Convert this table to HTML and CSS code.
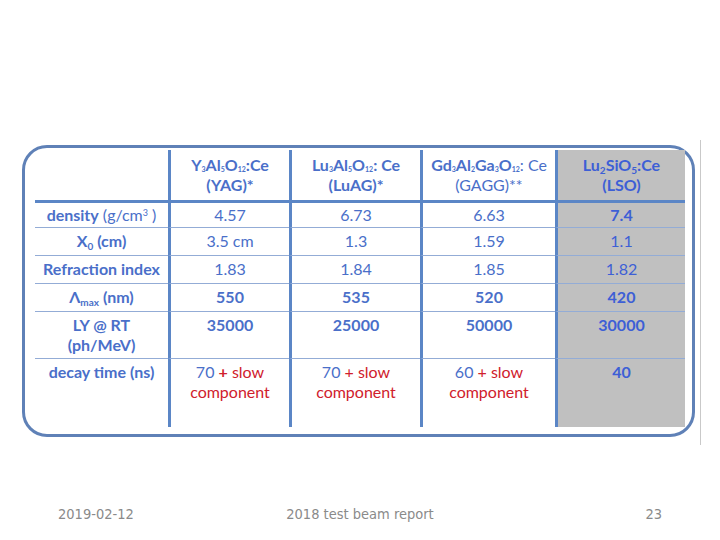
FILE: index.html
```html
<!DOCTYPE html>
<html>
<head>
<meta charset="utf-8">
<link rel="stylesheet" href="styles.css">
</head>
<body>
<div class="slide">
  <div class="wrap">
    <div class="frame">
      <div class="grid">
        <div class="c hd first"></div>
        <div class="c hd"><b>Y<sub class="s">3</sub>Al<sub class="s">5</sub>O<sub class="s">12</sub>:Ce</b><br><b>(YAG)*</b></div>
        <div class="c hd"><b>Lu<sub class="s">3</sub>Al<sub class="s">5</sub>O<sub class="s">12</sub>: Ce</b><br><b>(LuAG)*</b></div>
        <div class="c hd"><b>Gd<sub class="s">3</sub>Al<sub class="s">2</sub>Ga<sub class="s">3</sub>O<sub class="s">12</sub></b>: Ce<br>(GAGG)**</div>
        <div class="c hd gray"><b>Lu<sub class="m">2</sub>SiO<sub class="m">5</sub>:Ce</b><br><b>(LSO)</b></div>

        <div class="c r1 first"><b>density</b> (g/cm<sup class="p">3</sup> )</div>
        <div class="c r1">4.57</div>
        <div class="c r1">6.73</div>
        <div class="c r1">6.63</div>
        <div class="c r1 gray"><b>7.4</b></div>

        <div class="c rn first"><b>X<sub class="m">0</sub> (cm)</b></div>
        <div class="c rn">3.5 cm</div>
        <div class="c rn">1.3</div>
        <div class="c rn">1.59</div>
        <div class="c rn gray">1.1</div>

        <div class="c rn first"><b>Refraction index</b></div>
        <div class="c rn">1.83</div>
        <div class="c rn">1.84</div>
        <div class="c rn">1.85</div>
        <div class="c rn gray">1.82</div>

        <div class="c rn first"><b>Λ<sub class="m">max</sub> (nm)</b></div>
        <div class="c rn"><b>550</b></div>
        <div class="c rn"><b>535</b></div>
        <div class="c rn"><b>520</b></div>
        <div class="c rn gray"><b>420</b></div>

        <div class="c rn first"><b>LY @ RT<br>(ph/MeV)</b></div>
        <div class="c rn"><b>35000</b></div>
        <div class="c rn"><b>25000</b></div>
        <div class="c rn"><b>50000</b></div>
        <div class="c rn gray"><b>30000</b></div>

        <div class="c rn first"><b>decay time (ns)</b></div>
        <div class="c rn">70 <span class="red"><b>+</b> slow<br>component</span></div>
        <div class="c rn">70 <span class="red">+ slow<br>component</span></div>
        <div class="c rn">60 <span class="red">+ slow<br>component</span></div>
        <div class="c rn gray"><b>40</b></div>
      </div>
    </div>
  </div>
  <div class="footer">
    <span class="date">2019-02-12</span>
    <span class="title">2018 test beam report</span>
    <span class="num">23</span>
  </div>
</div>
</body>
</html>
```
FILE: styles.css
```css
html, body {
  margin: 0;
  padding: 0;
  background: #ffffff;
}
.slide {
  width: 720px;
  height: 540px;
  padding-top: 140px;
  box-sizing: border-box;
  overflow: hidden;
}
.wrap {
  margin-left: 22px;
  width: 679px;
  height: 305px;
  padding-top: 5px;
  box-sizing: border-box;
  border-right: 1px solid #c9c9c9;
}
.frame {
  width: 673px;
  height: 292px;
  box-sizing: border-box;
  border: 3px solid #5f81b7;
  border-radius: 25px;
  padding: 2px 7px 7px 10px;
}
.grid {
  display: grid;
  grid-template-columns: 133px 121px 131px 135px 130px;
  grid-template-rows: 50px 27px 28px 28px 28px 47px 69px;
  font-family: Lato, "Open Sans", sans-serif;
  font-size: 16px;
  line-height: 20px;
  color: #4a6fc9;
}
.c {
  box-sizing: border-box;
  text-align: center;
  padding-top: 3px;
  border-left: 3px solid #5b86c6;
  border-top: 1px solid #93acd6;
  white-space: nowrap;
}
.c.first {
  border-left: none;
}
.c.hd {
  border-top: none;
  padding-top: 5px;
}
.c.r1 {
  border-top: 3px solid #5b86c6;
  padding-top: 2px;
}
.gray {
  background: #c0c0c0;
  color: #3d5fd6;
}
b {
  font-weight: 700;
}
.s {
  font-size: 7px;
  vertical-align: -1px;
  line-height: 0;
}
.m {
  font-size: 10px;
  vertical-align: -3px;
  line-height: 0;
}
.p {
  font-size: 9px;
  vertical-align: 5px;
  line-height: 0;
}
.red {
  color: #d0202c;
}
.footer {
  margin-top: 60px;
  display: grid;
  grid-template-columns: 58px 1fr 1fr 58px;
  font-family: "DejaVu Sans Condensed", "DejaVu Sans", sans-serif;
  font-size: 14.5px;
  line-height: 18px;
  color: #8a8a8a;
}
.date {
  grid-column: 2;
  grid-row: 1;
  justify-self: start;
}
.title {
  grid-column: 2 / 4;
  grid-row: 1;
  justify-self: center;
}
.num {
  grid-column: 3;
  grid-row: 1;
  justify-self: end;
}
```
